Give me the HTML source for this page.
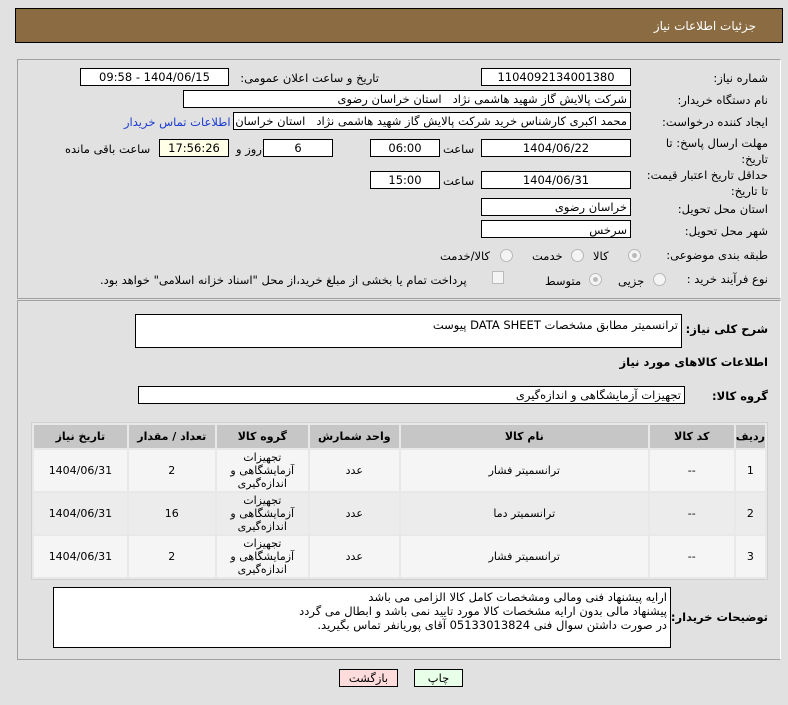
<!DOCTYPE html>
<html><head><meta charset="utf-8"><style>
body{margin:0;width:788px;height:705px;background:#e1e1e1;font-family:"DejaVu Sans","Liberation Sans",sans-serif;font-size:11.5px;color:#000;position:relative;overflow:hidden}
.a{position:absolute;white-space:nowrap}
.box{position:absolute;background:#fff;border:1px solid #000;box-sizing:border-box;direction:rtl;padding:0 3px;line-height:16px;white-space:nowrap;overflow:hidden}
.c{text-align:center}
.lb{position:absolute;direction:rtl;text-align:right;white-space:nowrap}
.panel{position:absolute;border:1px solid #a0a0a0;border-right-color:#fff;border-bottom-color:#a0a0a0;box-sizing:border-box}
.rad{position:absolute;width:11px;height:11px;border:1px solid #b8b8b8;border-radius:50%;background:#f4f4f4}
table{position:absolute;left:31px;top:422px;width:737px;border-collapse:separate;border-spacing:2px;background:#e8e8e8;border:1px solid #d0d0d0;font-size:11px}
th{background:#c6c6c6;height:23px;font-weight:bold;text-align:center;padding:0}
td{text-align:center;height:41px;padding:0;line-height:13px}
tr.r1 td{background:#f5f5f5}tr.r2 td{background:#ececec}
</style></head><body>
<div class="a" style="left:15px;top:8px;width:768px;height:35px;background:#8b6c42;border:1px solid #000;box-sizing:border-box"></div>
<div class="lb" style="right:32px;top:19px;color:#fff;font-size:12px">جزئیات اطلاعات نیاز</div>

<div class="panel" style="left:17px;top:59px;width:764px;height:240px"></div>
<div class="panel" style="left:17px;top:300px;width:764px;height:360px"></div>

<div class="lb" style="right:20px;top:71px">شماره نیاز:</div>
<div class="box c" style="left:481px;top:68px;width:150px;height:18px">1104092134001380</div>
<div class="lb" style="right:409px;top:71px">تاریخ و ساعت اعلان عمومی:</div>
<div class="box c" style="left:80px;top:68px;width:149px;height:18px">1404/06/15 - 09:58</div>

<div class="lb" style="right:20px;top:93px">نام دستگاه خریدار:</div>
<div class="box" style="left:183px;top:90px;width:448px;height:18px">شرکت پالایش گاز شهید هاشمی نژاد &nbsp; استان خراسان رضوی</div>

<div class="lb" style="right:20px;top:115px">ایجاد کننده درخواست:</div>
<div class="box" style="left:233px;top:112px;width:398px;height:18px">محمد اکبری کارشناس خرید شرکت پالایش گاز شهید هاشمی نژاد &nbsp; استان خراسان رضوی</div>
<div class="lb" style="left:124px;top:115px;color:#1a3bd0">اطلاعات تماس خریدار</div>

<div class="lb" style="right:20px;top:135px;line-height:16px">مهلت ارسال پاسخ: تا<br>تاریخ:</div>
<div class="box c" style="left:481px;top:139px;width:150px;height:18px">1404/06/22</div>
<div class="lb" style="left:443px;top:142px">ساعت</div>
<div class="box c" style="left:370px;top:139px;width:70px;height:18px">06:00</div>
<div class="box c" style="left:263px;top:139px;width:70px;height:18px">6</div>
<div class="lb" style="left:236px;top:142px">روز و</div>
<div class="box c" style="left:159px;top:139px;width:70px;height:18px;background:#ffffe8">17:56:26</div>
<div class="lb" style="left:65px;top:142px">ساعت باقی مانده</div>

<div class="lb" style="right:20px;top:167px;line-height:16px">حداقل تاریخ اعتبار قیمت:<br>تا تاریخ:</div>
<div class="box c" style="left:481px;top:171px;width:150px;height:18px">1404/06/31</div>
<div class="lb" style="left:443px;top:174px">ساعت</div>
<div class="box c" style="left:370px;top:171px;width:70px;height:18px">15:00</div>

<div class="lb" style="right:20px;top:202px">استان محل تحویل:</div>
<div class="box" style="left:481px;top:198px;width:150px;height:18px">خراسان رضوی</div>
<div class="lb" style="right:20px;top:224px">شهر محل تحویل:</div>
<div class="box" style="left:481px;top:220px;width:150px;height:18px;padding-top:1px">سرخس</div>

<div class="lb" style="right:20px;top:248px">طبقه بندی موضوعی:</div>
<div class="rad" style="left:628px;top:249px"><div style="margin:3px;width:5px;height:5px;border-radius:50%;background:#bbb"></div></div>
<div class="lb" style="left:593px;top:249px">کالا</div>
<div class="rad" style="left:571px;top:249px"></div>
<div class="lb" style="left:532px;top:249px">خدمت</div>
<div class="rad" style="left:500px;top:249px"></div>
<div class="lb" style="left:440px;top:249px">کالا/خدمت</div>

<div class="lb" style="right:20px;top:272px">نوع فرآیند خرید :</div>
<div class="rad" style="left:653px;top:273px"></div>
<div class="lb" style="left:618px;top:274px">جزیی</div>
<div class="rad" style="left:589px;top:273px"><div style="margin:3px;width:5px;height:5px;border-radius:50%;background:#bbb"></div></div>
<div class="lb" style="left:545px;top:274px">متوسط</div>
<div class="a" style="left:492px;top:271px;width:10px;height:11px;border:1px solid #bbb;background:#f4f4f4"></div>
<div class="lb" style="left:100px;top:273px">پرداخت تمام یا بخشی از مبلغ خرید،از محل "اسناد خزانه اسلامی" خواهد بود.</div>

<div class="lb" style="right:20px;top:322px;font-weight:bold">شرح کلی نیاز:</div>
<div class="box" style="left:135px;top:314px;width:547px;height:34px;padding-top:2px">ترانسمیتر مطابق مشخصات DATA SHEET پیوست</div>
<div class="lb" style="right:20px;top:355px;font-weight:bold">اطلاعات کالاهای مورد نیاز</div>
<div class="lb" style="right:20px;top:389px;font-weight:bold">گروه کالا:</div>
<div class="box" style="left:138px;top:386px;width:547px;height:18px">تجهیزات آزمایشگاهی و اندازه‌گیری</div>

<table dir="rtl">
<tr><th style="width:25px">ردیف</th><th style="width:84px">کد کالا</th><th style="width:247px">نام کالا</th><th style="width:89px">واحد شمارش</th><th style="width:91px">گروه کالا</th><th style="width:86px">تعداد / مقدار</th><th>تاریخ نیاز</th></tr>
<tr class="r1"><td>1</td><td>--</td><td>ترانسمیتر فشار</td><td>عدد</td><td>تجهیزات<br>آزمایشگاهی و<br>اندازه‌گیری</td><td>2</td><td>1404/06/31</td></tr>
<tr class="r2"><td>2</td><td>--</td><td>ترانسمیتر دما</td><td>عدد</td><td>تجهیزات<br>آزمایشگاهی و<br>اندازه‌گیری</td><td>16</td><td>1404/06/31</td></tr>
<tr class="r1"><td>3</td><td>--</td><td>ترانسمیتر فشار</td><td>عدد</td><td>تجهیزات<br>آزمایشگاهی و<br>اندازه‌گیری</td><td>2</td><td>1404/06/31</td></tr>
</table>

<div class="lb" style="right:20px;top:610px;font-weight:bold">توضیحات خریدار:</div>
<div class="box" style="left:53px;top:587px;width:618px;height:61px;padding-top:2px;line-height:14px">ارایه پیشنهاد فنی ومالی ومشخصات کامل کالا الزامی می باشد<br>پیشنهاد مالی بدون ارایه مشخصات کالا مورد تایید نمی باشد و ابطال می گردد<br>در صورت داشتن سوال فنی 05133013824 آقای پوریانفر تماس بگیرید.</div>

<div class="a c" style="left:339px;top:669px;width:59px;height:18px;background:#ffdcdc;border:1px solid #000;box-sizing:border-box;line-height:16px">بازگشت</div>
<div class="a c" style="left:414px;top:669px;width:49px;height:18px;background:#e8ffe8;border:1px solid #000;box-sizing:border-box;line-height:16px">چاپ</div>
</body></html>
